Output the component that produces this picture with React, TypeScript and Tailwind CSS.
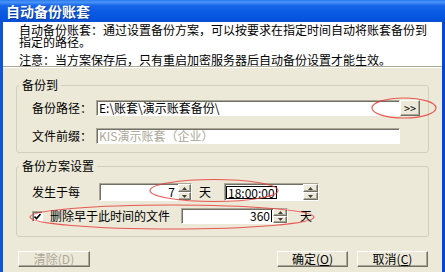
import React from "react";

const raised =
  "border border-t-white border-l-white border-b-[#716f64] border-r-[#716f64] shadow-[inset_-1px_-1px_0_#aca899] bg-[#ece9d8]";
const sunken =
  "border border-t-[#aca899] border-l-[#aca899] border-b-white border-r-white shadow-[inset_1px_1px_0_#716f64] bg-white";

function Up() {
  return (
    <svg width="5" height="3" viewBox="0 0 5 3">
      <path d="M2.5 0L5 3H0z" fill="#404040" />
    </svg>
  );
}
function Down() {
  return (
    <svg width="5" height="3" viewBox="0 0 5 3">
      <path d="M0 0H5L2.5 3z" fill="#404040" />
    </svg>
  );
}

function Spin({ className }: { className: string }) {
  return (
    <div className={`flex flex-col shrink-0 ${className}`}>
      <div className={`flex-1 flex items-center justify-center ${raised}`}>
        <Up />
      </div>
      <div className={`flex-1 flex items-center justify-center ${raised}`}>
        <Down />
      </div>
    </div>
  );
}

function Btn({ children, className, disabled }: { children: React.ReactNode; className: string; disabled?: boolean }) {
  return (
    <div
      className={`h-[16px] flex items-center justify-center leading-[12px] ${raised} ${
        disabled ? "text-[#aca899]" : "text-black"
      } ${className}`}
    >
      {children}
    </div>
  );
}

export default function App() {
  return (
    <div className="relative w-[445px] h-[272px] overflow-hidden flex flex-col bg-[#ece9d8] font-['Noto_Sans_CJK_SC','Noto_Sans',sans-serif] text-[12px] text-black">
      <div className="h-[22px] shrink-0 flex items-center pl-[6px] bg-[linear-gradient(180deg,#2a7af0_0%,#4a94f8_10%,#1866ea_25%,#0a5ae2_55%,#0554de_85%,#0a4ed2_100%)] text-white font-bold text-[14px] leading-[15px] [text-shadow:1px_1px_0_#0a3a9a]">
        自动备份账套
      </div>
      <div className="flex-1 flex flex-col min-h-0 border-x-[3px] border-l-[#0a56de] border-r-[#0846cc] bg-[#ece9d8]">
        <div className="h-[45px] shrink-0 bg-white pl-[16px] pt-[2px] border-b border-b-[#aca899]">
          <p className="leading-[12px]">
            自动备份账套：通过设置备份方案，可以按要求在指定时间自动将账套备份到
            <br />
            指定的路径。
          </p>
          <p className="mt-[6px] leading-[12px]">注意：当方案保存后，只有重启加密服务器后自动备份设置才能生效。</p>
        </div>
        <div className="h-px shrink-0 bg-white" />

        <fieldset className="mx-[13px] mt-[11px] border border-[#d0d0bf] rounded-[3px] min-w-0">
          <legend className="ml-[2px] px-[3px] leading-[12px]">备份到</legend>
          <div className="pl-[15px] pt-[9px] pb-[8px]">
            <div className="flex items-center h-[16px]">
              <span className="w-[64px] shrink-0 leading-[12px]">备份路径：</span>
              <div className={`w-[304px] h-[16px] flex items-center pl-[2px] leading-[12px] ${sunken}`}>
                E:\账套\演示账套备份\
              </div>
              <Btn className="w-[20px] text-[11px]">&gt;&gt;</Btn>
            </div>
            <div className="flex items-center h-[16px] mt-[12px]">
              <span className="w-[64px] shrink-0 leading-[12px]">文件前缀：</span>
              <div className={`w-[304px] h-[16px] flex items-center pl-[2px] leading-[12px] text-[#aca899] ${sunken}`}>
                KIS演示账套（企业）
              </div>
            </div>
          </div>
        </fieldset>

        <fieldset className="mx-[13px] mt-[7px] border border-[#d0d0bf] rounded-[3px] min-w-0">
          <legend className="ml-[2px] px-[3px] leading-[12px]">备份方案设置</legend>
          <div className="pl-[15px] pt-[11px] pb-[12px]">
            <div className="flex items-center h-[18px]">
              <span className="w-[67px] shrink-0 leading-[12px]">发生于每</span>
              <div className={`w-[93px] h-[18px] flex ${sunken}`}>
                <div className="flex-1 flex items-center justify-end pr-[3px] leading-[12px]">7</div>
                <Spin className="w-[13px]" />
              </div>
              <span className="ml-[7px] leading-[12px]">天</span>
              <div className={`ml-[13px] w-[95px] h-[18px] flex ${sunken}`}>
                <div className="flex-1 flex items-center pl-[1px]">
                  <span className="border border-black px-[1px] leading-[11px]">18:00:00</span>
                </div>
                <Spin className="w-[15px]" />
              </div>
            </div>
            <div className="flex items-center h-[16px] mt-[7px]">
              <div className={`w-[11px] h-[11px] shrink-0 flex items-center justify-center ${sunken}`}>
                <svg width="7" height="7" viewBox="0 0 7 7">
                  <path d="M0.5 3.5L2.5 5.5L6.5 1" stroke="#000" strokeWidth="1.6" fill="none" />
                </svg>
              </div>
              <span className="ml-[7px] leading-[12px]">删除早于此时间的文件</span>
              <div className={`ml-[11px] w-[107px] h-[16px] flex ${sunken}`}>
                <div className="flex-1 flex items-center justify-end pr-[1px] leading-[12px]">
                  360<span className="ml-[1px] w-px h-[12px] bg-black" />
                </div>
                <Spin className="w-[14px]" />
              </div>
              <span className="ml-[12px] leading-[12px]">天</span>
            </div>
          </div>
        </fieldset>

        <div className="flex items-center mt-[14px] pl-[15px] pr-[14px]">
          <Btn className="w-[72px]" disabled>
            清除(<u>D</u>)
          </Btn>
          <div className="flex-1" />
          <Btn className="w-[71px]">
            确定(<u>O</u>)
          </Btn>
          <Btn className="w-[71px] ml-[9px]">
            取消(<u>C</u>)
          </Btn>
        </div>
      </div>

      <svg className="absolute inset-0 pointer-events-none" width="445" height="272" viewBox="0 0 445 272">
        <g fill="none" stroke="#e8403c" strokeWidth="1.2" opacity="0.85">
          <ellipse cx="404" cy="108" rx="32" ry="10" />
          <ellipse cx="214" cy="190.5" rx="64" ry="11" />
          <ellipse cx="172" cy="217" rx="142" ry="12" />
        </g>
      </svg>
    </div>
  );
}
